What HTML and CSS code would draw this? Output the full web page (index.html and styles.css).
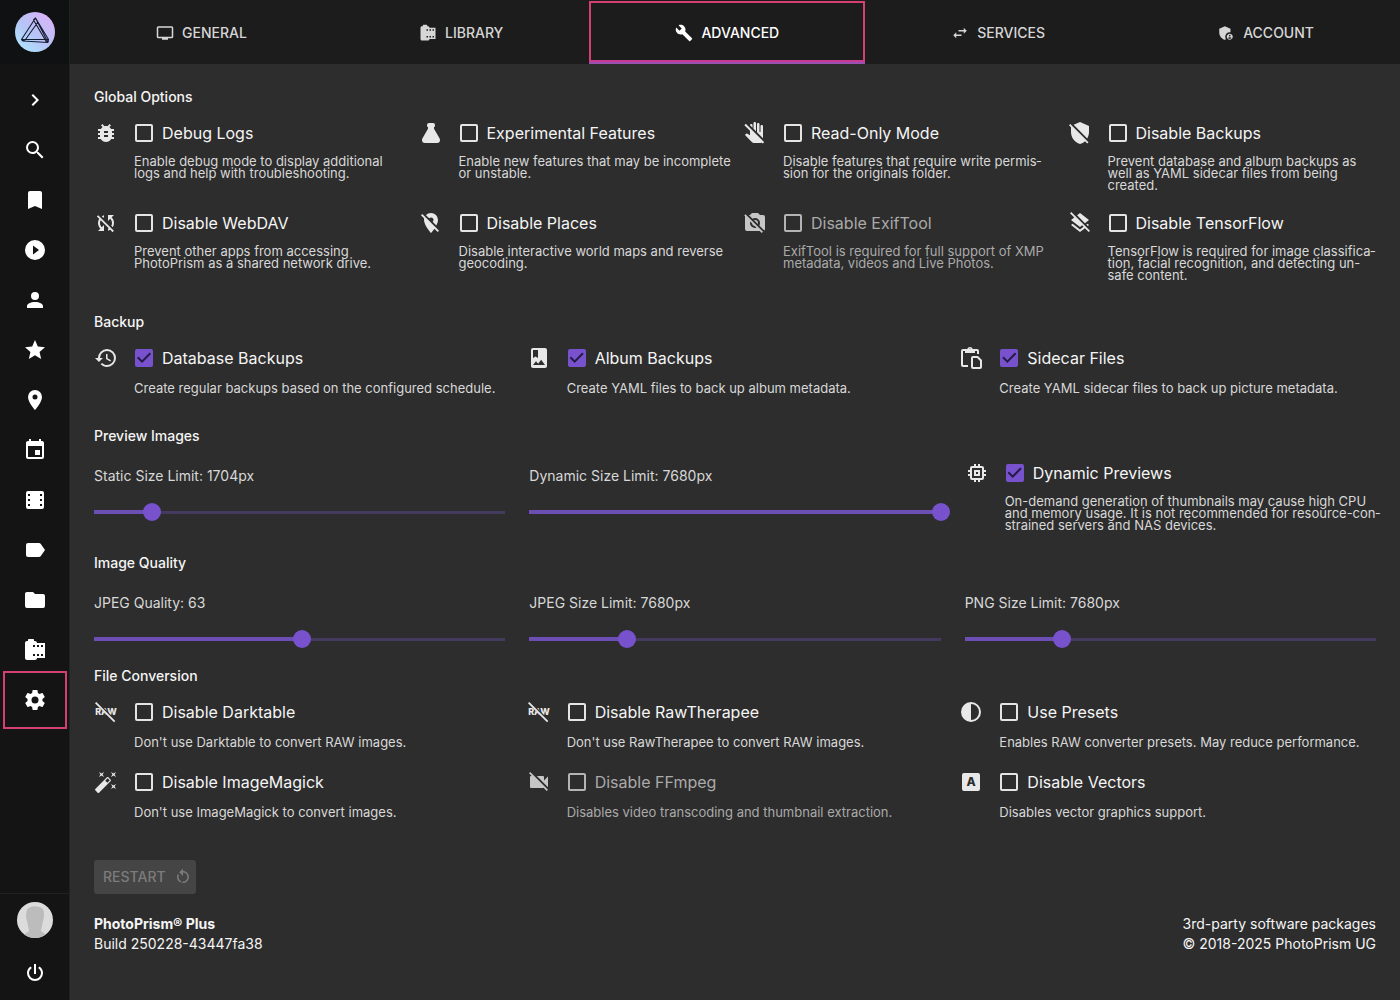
FILE: index.html
```
<!DOCTYPE html>
<html lang="en">
<head>
<meta charset="utf-8">
<meta name="viewport" content="width=device-width, initial-scale=1">
<title>Advanced Settings</title>
<link rel="stylesheet" href="styles.css">
</head>
<body>
<svg class="sprite" aria-hidden="true">
  <symbol id="i-monitor" viewBox="0 0 24 24"><path d="M21,17H3V5H21M21,3H3A2,2 0 0,0 1,5V17A2,2 0 0,0 3,19H8V21H16V19H21A2,2 0 0,0 23,17V5A2,2 0 0,0 21,3Z"/></symbol>
  <symbol id="i-roll" viewBox="0 0 24 24"><path d="M14 5c0-1.1-.9-2-2-2h-1V2c0-.55-.45-1-1-1H6c-.55 0-1 .45-1 1v1H4c-1.1 0-2 .9-2 2v15c0 1.1.9 2 2 2h8c1.1 0 2-.9 2-2h8V5h-8zm-2 13h-2v-2h2v2zm0-9h-2V7h2v2zm4 9h-2v-2h2v2zm0-9h-2V7h2v2zm4 9h-2v-2h2v2zm0-9h-2V7h2v2z"/></symbol>
  <symbol id="i-wrench" viewBox="0 0 24 24"><path d="M22.7,19L13.6,9.9C14.5,7.6 14,4.9 12.1,3C10.1,1 7.1,0.6 4.7,1.7L9,6L6,9L1.6,4.7C0.4,7.1 0.9,10.1 2.9,12.1C4.8,14 7.5,14.5 9.8,13.6L18.9,22.7C19.3,23.1 19.9,23.1 20.3,22.7L22.6,20.4C23.1,20 23.1,19.3 22.7,19Z"/></symbol>
  <symbol id="i-swap" viewBox="0 0 24 24"><path d="M21,9L17,5V8H10V10H17V13M7,11L3,15L7,19V16H14V14H7V11Z"/></symbol>
  <symbol id="i-shield-account" viewBox="0 0 24 24"><path d="M17,11c0.34,0,0.67,0.04,1,0.09V6.27L10.5,3L3,6.27v4.91c0,4.54,3.2,8.79,7.5,9.82c0.55-0.13,1.08-0.32,1.6-0.55C11.41,19.47,11,18.28,11,17C11,13.69,13.69,11,17,11z"/><path d="M17,13c-2.21,0-4,1.79-4,4c0,2.21,1.79,4,4,4s4-1.79,4-4C21,14.79,19.21,13,17,13z M17,14.38c0.62,0,1.12,0.51,1.12,1.12s-0.51,1.12-1.12,1.12s-1.12-0.51-1.12-1.12S16.38,14.38,17,14.38z M17,19.75c-0.93,0-1.74-0.46-2.24-1.17c0.05-0.72,1.51-1.08,2.24-1.08s2.19,0.36,2.24,1.08C18.74,19.29,17.93,19.75,17,19.75z"/></symbol>
  <symbol id="i-chevron" viewBox="0 0 24 24"><path d="M8.59,16.58L13.17,12L8.59,7.41L10,6L16,12L10,18L8.59,16.58Z"/></symbol>
  <symbol id="i-search" viewBox="0 0 24 24"><path d="M9.5,3A6.5,6.5 0 0,1 16,9.5C16,11.11 15.41,12.59 14.44,13.73L14.71,14H15.5L20.5,19L19,20.5L14,15.5V14.71L13.73,14.44C12.59,15.41 11.11,16 9.5,16A6.5,6.5 0 0,1 3,9.5A6.5,6.5 0 0,1 9.5,3M9.5,5C7,5 5,7 5,9.5C5,12 7,14 9.5,14C12,14 14,12 14,9.5C14,7 12,5 9.5,5Z"/></symbol>
  <symbol id="i-bookmark" viewBox="0 0 24 24"><path d="M17,3H7A2,2 0 0,0 5,5V21L12,18L19,21V5C19,3.89 18.1,3 17,3Z"/></symbol>
  <symbol id="i-play" viewBox="0 0 24 24"><path d="M10,16.5V7.5L16,12M12,2A10,10 0 0,0 2,12A10,10 0 0,0 12,22A10,10 0 0,0 22,12A10,10 0 0,0 12,2Z"/></symbol>
  <symbol id="i-person" viewBox="0 0 24 24"><path d="M12,4A4,4 0 0,1 16,8A4,4 0 0,1 12,12A4,4 0 0,1 8,8A4,4 0 0,1 12,4M12,14C16.42,14 20,15.79 20,18V20H4V18C4,15.79 7.58,14 12,14Z"/></symbol>
  <symbol id="i-star" viewBox="0 0 24 24"><path d="M12,17.27L18.18,21L16.54,13.97L22,9.24L14.81,8.62L12,2L9.19,8.62L2,9.24L7.45,13.97L5.82,21L12,17.27Z"/></symbol>
  <symbol id="i-marker" viewBox="0 0 24 24"><path d="M12,11.5A2.5,2.5 0 0,1 9.5,9A2.5,2.5 0 0,1 12,6.5A2.5,2.5 0 0,1 14.5,9A2.5,2.5 0 0,1 12,11.5M12,2A7,7 0 0,0 5,9C5,14.25 12,22 12,22C12,22 19,14.25 19,9A7,7 0 0,0 12,2Z"/></symbol>
  <symbol id="i-calendar" viewBox="0 0 24 24"><path d="M19,19H5V8H19M16,1V3H8V1H6V3H5C3.89,3 3,3.89 3,5V19A2,2 0 0,0 5,21H19A2,2 0 0,0 21,19V5C21,3.89 20.1,3 19,3H18V1M17,12H12V17H17V12Z"/></symbol>
  <symbol id="i-film" viewBox="0 0 24 24"><path fill-rule="evenodd" d="M5,3H19A2,2 0 0,1 21,5V19A2,2 0 0,1 19,21H5A2,2 0 0,1 3,19V5A2,2 0 0,1 5,3ZM5,6V8H7V6ZM5,11V13H7V11ZM5,16V18H7V16ZM17,6V8H19V6ZM17,11V13H19V11ZM17,16V18H19V16Z"/></symbol>
  <symbol id="i-label" viewBox="0 0 24 24"><path d="M17.63,5.84C17.27,5.33 16.67,5 16,5H5A2,2 0 0,0 3,7V17A2,2 0 0,0 5,19H16C16.67,19 17.27,18.66 17.63,18.15L22,12L17.63,5.84Z"/></symbol>
  <symbol id="i-folder" viewBox="0 0 24 24"><path d="M10,4H4C2.89,4 2,4.89 2,6V18A2,2 0 0,0 4,20H20A2,2 0 0,0 22,18V8C22,6.89 21.1,6 20,6H12L10,4Z"/></symbol>
  <symbol id="i-cog" viewBox="0 0 24 24"><path d="M12,15.5A3.5,3.5 0 0,1 8.5,12A3.5,3.5 0 0,1 12,8.5A3.5,3.5 0 0,1 15.5,12A3.5,3.5 0 0,1 12,15.5M19.43,12.97C19.47,12.65 19.5,12.33 19.5,12C19.5,11.67 19.47,11.34 19.43,11L21.54,9.37C21.73,9.22 21.78,8.95 21.66,8.73L19.66,5.27C19.54,5.05 19.27,4.96 19.05,5.05L16.56,6.05C16.04,5.66 15.5,5.32 14.87,5.07L14.5,2.42C14.46,2.18 14.25,2 14,2H10C9.75,2 9.54,2.18 9.5,2.42L9.13,5.07C8.5,5.32 7.96,5.66 7.44,6.05L4.95,5.05C4.73,4.96 4.46,5.05 4.34,5.27L2.34,8.73C2.21,8.95 2.27,9.22 2.46,9.37L4.57,11C4.53,11.34 4.5,11.67 4.5,12C4.5,12.33 4.53,12.65 4.57,12.97L2.46,14.63C2.27,14.78 2.21,15.05 2.34,15.27L4.34,18.73C4.46,18.95 4.73,19.03 4.95,18.95L7.44,17.94C7.96,18.34 8.5,18.68 9.13,18.93L9.5,21.58C9.54,21.82 9.75,22 10,22H14C14.25,22 14.46,21.82 14.5,21.58L14.87,18.93C15.5,18.67 16.04,18.34 16.56,17.94L19.05,18.95C19.27,19.03 19.54,18.95 19.66,18.73L21.66,15.27C21.78,15.05 21.73,14.78 21.54,14.63L19.43,12.97Z"/></symbol>
  <symbol id="i-power" viewBox="0 0 24 24"><path d="M16.56,5.44L15.11,6.89C16.84,7.94 18,9.83 18,12A6,6 0 0,1 12,18A6,6 0 0,1 6,12C6,9.83 7.16,7.94 8.88,6.88L7.44,5.44C5.36,6.88 4,9.28 4,12A8,8 0 0,0 12,20A8,8 0 0,0 20,12C20,9.28 18.64,6.88 16.56,5.44M13,3H11V13H13"/></symbol>
  <symbol id="i-bug" viewBox="0 0 24 24"><path d="M14,12H10V10H14M14,16H10V14H14M20,8H17.19C16.74,7.22 16.12,6.55 15.37,6.04L17,4.41L15.59,3L13.42,5.17C12.96,5.06 12.5,5 12,5C11.5,5 11.05,5.06 10.59,5.17L8.41,3L7,4.41L8.62,6.04C7.88,6.55 7.26,7.22 6.81,8H4V10H6.09C6.04,10.33 6,10.66 6,11V12H4V14H6V15C6,15.34 6.04,15.67 6.09,16H4V18H6.81C7.85,19.79 9.78,21 12,21C14.22,21 16.15,19.79 17.19,18H20V16H17.91C17.96,15.67 18,15.34 18,15V14H20V12H18V11C18,10.66 17.96,10.33 17.91,10H20V8Z"/></symbol>
  <symbol id="i-flask" viewBox="0 0 24 24"><path d="M6,22A3,3 0 0,1 3,19C3,18.4 3.18,17.84 3.5,17.37L9,7.81V6A1,1 0 0,1 8,5V4A2,2 0 0,1 10,2H14A2,2 0 0,1 16,4V5A1,1 0 0,1 15,6V7.81L20.5,17.37C20.82,17.84 21,18.4 21,19A3,3 0 0,1 18,22H6Z"/></symbol>
  <symbol id="i-hand-off" viewBox="0 0 24 24"><path d="M13,10.17l-2.5-2.5V2.25C10.5,1.56,11.06,1,11.75,1S13,1.56,13,2.25V10.17z M20,12.75V11V5.25C20,4.56,19.44,4,18.75,4S17.5,4.56,17.5,5.25V11h-1V3.25C16.5,2.56,15.94,2,15.25,2S14,2.56,14,3.25v7.92l6,6V12.75z M9.5,4.25C9.5,3.56,8.94,3,8.25,3c-0.67,0-1.2,0.53-1.24,1.18L9.5,6.67V4.25z M21.19,21.19L2.81,2.81L1.39,4.22L7,9.83v4.3c-1.11-.64-2.58-1.47-2.6-1.48c-.17-.09-.34-.14-.54-.14c-.26,0-.5,.09-.7,.26C3.12,12.78,2,13.88,2,13.88l6.8,7.18c.57,.6,1.35,.94,2.18,.94H17c.62,0,1.18-.19,1.65-.52l1.13,1.13L21.19,21.19z"/></symbol>
  <symbol id="i-shield-off" viewBox="0 0 24 24"><path d="M1,4.27L2.28,3L20.5,21.22L19.23,22.5L17,20.25C15.57,21.6 13.87,22.57 12,23C6.84,21.74 3,16.55 3,11V6.27L1,4.27M12,1L21,5V11C21,13.28 20.35,15.5 19.23,17.41L5.65,3.82L12,1Z"/></symbol>
  <symbol id="i-sync-off" viewBox="0 0 24 24"><path d="M20,4H14V10L16.24,7.76C17.32,8.85 18,10.34 18,12C18,13 17.75,13.94 17.32,14.77L18.78,16.23C19.55,15 20,13.56 20,12C20,9.79 19.09,7.8 17.64,6.36L20,4M2.86,5.41L5.22,7.77C4.45,9 4,10.44 4,12C4,14.21 4.91,16.2 6.36,17.64L4,20H10V14L7.76,16.24C6.68,15.15 6,13.66 6,12C6,11 6.25,10.06 6.68,9.23L14.76,17.31C14.5,17.44 14.26,17.56 14,17.65V19.74C14.79,19.53 15.54,19.2 16.22,18.78L18.58,21.14L19.85,19.87L4.14,4.14L2.86,5.41M10,6.35V4.26C9.2,4.47 8.45,4.8 7.77,5.22L9.23,6.68C9.5,6.56 9.73,6.44 10,6.35Z"/></symbol>
  <symbol id="i-marker-off" viewBox="0 0 24 24"><path d="M16.37,16.1L11.75,11.47L11.64,11.36L3.27,3L2,4.27L5.18,7.45C5.06,7.95 5,8.46 5,9C5,14.25 12,22 12,22C12,22 13.67,20.15 15.37,17.65L18.73,21L20,19.72M12,6.5A2.5,2.5 0 0,1 14.5,9C14.5,9.73 14.17,10.39 13.67,10.85L17.3,14.5C18.28,12.62 19,10.68 19,9A7,7 0 0,0 12,2C10,2 8.24,2.82 6.96,4.14L10.15,7.33C10.61,6.82 11.26,6.5 12,6.5Z"/></symbol>
  <symbol id="i-camera-off" viewBox="0 0 24 24"><path d="M1.2,4.47L2.5,3.2L20,20.72L18.73,22L16.73,20H4A2,2 0 0,1 2,18V6C2,5.78 2.04,5.57 2.1,5.37L1.2,4.47M7,4L9,2H15L17,4H20A2,2 0 0,1 22,6V18C22,18.6 21.74,19.13 21.32,19.5L16.33,14.5C16.76,13.77 17,12.91 17,12A5,5 0 0,0 12,7C11.09,7 10.23,7.24 9.5,7.67L5.82,4H7M7,12A5,5 0 0,0 12,17C12.5,17 13.03,16.92 13.5,16.77L11.72,15C10.29,14.85 9.15,13.71 9,12.28L7.23,10.5C7.08,10.97 7,11.5 7,12M12,9A3,3 0 0,1 15,12C15,12.35 14.94,12.69 14.83,13L11,9.17C11.31,9.06 11.65,9 12,9Z"/></symbol>
  <symbol id="i-layers-off" viewBox="0 0 24 24"><path d="M3.27,1L2,2.27L6.22,6.5L3,9L4.63,10.27L12,16L14.1,14.37L15.53,15.8L12,18.54L4.63,12.81L3,14.07L12,21.07L16.95,17.22L20.73,21L22,19.73L3.27,1M19.36,10.27L21,9L12,2L9.09,4.27L16.96,12.15L19.36,10.27M19.81,15L21,14.07L19.57,12.64L18.38,13.56L19.81,15Z"/></symbol>
  <symbol id="i-history" viewBox="0 0 24 24"><path d="M13.5,8H12V13L16.28,15.54L17,14.33L13.5,12.25V8M13,3A9,9 0 0,0 4,12H1L4.96,16.03L9,12H6A7,7 0 0,1 13,5A7,7 0 0,1 20,12A7,7 0 0,1 13,19C11.07,19 9.32,18.21 8.06,16.94L6.64,18.36C8.27,20 10.5,21 13,21A9,9 0 0,0 22,12A9,9 0 0,0 13,3"/></symbol>
  <symbol id="i-album" viewBox="0 0 24 24"><path d="M6,19L9,15.14L11.14,17.72L14.14,13.86L18,19H6M6,4H11V12L8.5,10.5L6,12M18,2H6A2,2 0 0,0 4,4V20A2,2 0 0,0 6,22H18A2,2 0 0,0 20,20V4A2,2 0 0,0 18,2Z"/></symbol>
  <symbol id="i-clipboard" viewBox="0 0 24 24"><path fill="none" stroke="currentColor" stroke-width="2" stroke-linejoin="round" d="M9,20H4A1,1 0 0,1 3,19V5A1,1 0 0,1 4,4H18A1,1 0 0,1 19,5V8M13,12A1,1 0 0,1 14,11H18.500L22,14.500V21A1,1 0 0,1 21,22H14A1,1 0 0,1 13,21Z"/><path fill-rule="evenodd" d="M6,3H8.200A3,3 0 0,1 13.800,3H16V7H6ZM11,2.500A1,1 0 0,0 11,4.500A1,1 0 0,0 11,2.500Z"/></symbol>
  <symbol id="i-chip" viewBox="0 0 24 24"><path d="M17,17H7V7H17M21,11V9H19V7C19,5.89 18.1,5 17,5H15V3H13V5H11V3H9V5H7C5.89,5 5,5.89 5,7V9H3V11H5V13H3V15H5V17A2,2 0 0,0 7,19H9V21H11V19H13V21H15V19H17A2,2 0 0,0 19,17V15H21V13H19V11M13,13H11V11H13M15,9H9V15H15V9Z"/></symbol>
  <symbol id="i-raw-off" viewBox="0 0 24 24"><text class="icon-text" x="12" y="15" text-anchor="middle" font-size="9">RAW</text><path class="cut" d="M4,2L22,20L20,22L2,4Z"/><path d="M2.300,2L21.300,21L20,22.300L1,3.300Z"/></symbol>
  <symbol id="i-contrast" viewBox="0 0 24 24"><circle cx="12" cy="12" r="9" fill="none" stroke="currentColor" stroke-width="2"/><path d="M12,3V21A9,9 0 0,1 12,3Z"/></symbol>
  <symbol id="i-wand" viewBox="0 0 24 24"><path d="M7.5,5.6L5,7L6.4,4.5L5,2L7.5,3.4L10,2L8.6,4.5L10,7L7.5,5.6M19.5,15.4L22,14L20.6,16.5L22,19L19.5,17.6L17,19L18.4,16.5L17,14L19.5,15.4M22,2L20.6,4.5L22,7L19.5,5.6L17,7L18.4,4.5L17,2L19.5,3.4L22,2M13.34,12.78L15.78,10.34L13.66,8.22L11.22,10.66L13.34,12.78M14.37,7.29L16.71,9.63C17.1,10 17.1,10.65 16.71,11.04L5.04,22.71C4.65,23.1 4,23.1 3.63,22.71L1.29,20.37C0.9,20 0.9,19.35 1.29,18.96L12.96,7.29C13.35,6.9 14,6.9 14.37,7.29Z"/></symbol>
  <symbol id="i-video-off" viewBox="0 0 24 24"><path d="M3.27,2L2,3.27L4.73,6H4A1,1 0 0,0 3,7V17A1,1 0 0,0 4,18H16C16.2,18 16.39,17.92 16.54,17.82L19.73,21L21,19.73M21,6.5L17,10.5V7A1,1 0 0,0 16,6H9.82L21,17.18V6.5Z"/></symbol>
  <symbol id="i-alpha-box" viewBox="0 0 24 24"><rect x="3" y="3" width="18" height="18" rx="2"/><text class="icon-text cut" x="12" y="16" text-anchor="middle" font-size="12">A</text></symbol>
  <symbol id="i-restart" viewBox="0 0 24 24"><path d="M12,4C14.1,4 16.1,4.8 17.6,6.3C20.7,9.4 20.7,14.5 17.6,17.6C15.8,19.5 13.3,20.2 10.9,19.9L11.4,17.9C13.1,18.1 14.9,17.5 16.2,16.2C18.5,13.9 18.5,10.1 16.2,7.7C15.1,6.6 13.5,6 12,6V10.6L7,5.6L12,0.6V4M6.3,17.6C3.7,15 3.3,11 5.1,7.9L6.6,9.4C5.5,11.6 5.9,14.4 7.8,16.2C8.3,16.7 8.9,17.1 9.6,17.4L9,19.4C8,19 7.1,18.4 6.3,17.6Z"/></symbol>
</svg>

<div class="app">
  <aside class="sidebar">
    <a class="brand" href="#" aria-label="Home">
      <svg class="logo" viewBox="0 0 40 40">
        <defs><linearGradient id="brand-gradient" x1="0.1" y1="0.9" x2="0.8" y2="0.1"><stop offset="0" stop-color="#aee4ff"/><stop offset="0.5" stop-color="#b6c3f5"/><stop offset="1" stop-color="#d7b4f8"/></linearGradient></defs>
        <circle cx="20" cy="20" r="20" fill="url(#brand-gradient)"/>
        <path d="M20.500,6L6.500,27.500L8,29L33,30.500L33.500,27.500L20.500,6ZM20.500,6L18.500,8L31.500,30M23,10L10.500,27.500L33.500,27.500M6.500,27.500L10.500,27.500L8,29M20.500,6L33,30.500" fill="none" stroke="#151b30" stroke-width="1.100" stroke-linejoin="round"/>
      </svg>
    </a>
    <nav class="side-nav" aria-label="Main">
      <a href="#" aria-label="Expand"><svg class="icon"><use href="#i-chevron"/></svg></a>
      <a href="#" aria-label="Search"><svg class="icon"><use href="#i-search"/></svg></a>
      <a href="#" aria-label="Albums"><svg class="icon"><use href="#i-bookmark"/></svg></a>
      <a href="#" aria-label="Videos"><svg class="icon"><use href="#i-play"/></svg></a>
      <a href="#" aria-label="People"><svg class="icon"><use href="#i-person"/></svg></a>
      <a href="#" aria-label="Favorites"><svg class="icon"><use href="#i-star"/></svg></a>
      <a href="#" aria-label="Places"><svg class="icon"><use href="#i-marker"/></svg></a>
      <a href="#" aria-label="Calendar"><svg class="icon"><use href="#i-calendar"/></svg></a>
      <a href="#" aria-label="Moments"><svg class="icon"><use href="#i-film"/></svg></a>
      <a href="#" aria-label="Labels"><svg class="icon"><use href="#i-label"/></svg></a>
      <a href="#" aria-label="Folders"><svg class="icon"><use href="#i-folder"/></svg></a>
      <a href="#" aria-label="Library"><svg class="icon"><use href="#i-roll"/></svg></a>
      <a class="current" href="#" aria-label="Settings"><svg class="icon"><use href="#i-cog"/></svg></a>
    </nav>
    <div class="side-user">
      <a href="#" aria-label="Account">
        <svg class="avatar" viewBox="0 0 36 36"><defs><clipPath id="round"><circle cx="18" cy="18" r="18"/></clipPath></defs><g clip-path="url(#round)"><rect width="36" height="36" fill="#dcdcdc"/><path d="M10,8C12,3 24,3 26.500,8C27.500,12 27,17 25.500,21C25,25 24,27 24,29C26,31 29,31 30,36H6C7,31 10,31 12,29C12,27 11,25 10.500,21C9,17 8.500,12 10,8Z" fill="#bcbcbc"/></g></svg>
      </a>
      <button class="power" type="button" aria-label="Log out"><svg class="icon"><use href="#i-power"/></svg></button>
    </div>
  </aside>

  <main class="main">
    <nav class="tabs" aria-label="Settings">
      <a class="tab" href="#"><svg class="icon-small"><use href="#i-monitor"/></svg>GENERAL</a>
      <a class="tab" href="#"><svg class="icon-small"><use href="#i-roll"/></svg>LIBRARY</a>
      <a class="tab active" href="#" aria-current="page"><svg class="icon-small"><use href="#i-wrench"/></svg>ADVANCED</a>
      <a class="tab" href="#"><svg class="icon-small"><use href="#i-swap"/></svg>SERVICES</a>
      <a class="tab" href="#"><svg class="icon-small"><use href="#i-shield-account"/></svg>ACCOUNT</a>
    </nav>

    <form class="content">
      <section class="section global">
        <h2>Global Options</h2>
        <div class="grid four">
          <div class="option"><svg class="icon"><use href="#i-bug"/></svg><label><input type="checkbox">Debug Logs</label><p>Enable debug mode to display additional logs and help with troubleshooting.</p></div>
          <div class="option"><svg class="icon"><use href="#i-flask"/></svg><label><input type="checkbox">Experimental Features</label><p>Enable new features that may be incomplete or unstable.</p></div>
          <div class="option"><svg class="icon"><use href="#i-hand-off"/></svg><label><input type="checkbox">Read-Only Mode</label><p>Disable features that require write permis&shy;sion for the originals folder.</p></div>
          <div class="option"><svg class="icon"><use href="#i-shield-off"/></svg><label><input type="checkbox">Disable Backups</label><p>Prevent database and album backups as well as YAML sidecar files from being created.</p></div>
          <div class="option"><svg class="icon"><use href="#i-sync-off"/></svg><label><input type="checkbox">Disable WebDAV</label><p>Prevent other apps from accessing PhotoPrism as a shared network drive.</p></div>
          <div class="option"><svg class="icon"><use href="#i-marker-off"/></svg><label><input type="checkbox">Disable Places</label><p>Disable interactive world maps and reverse geocoding.</p></div>
          <div class="option disabled"><svg class="icon"><use href="#i-camera-off"/></svg><label><input type="checkbox" disabled>Disable ExifTool</label><p>ExifTool is required for full support of XMP metadata, videos and Live Photos.</p></div>
          <div class="option"><svg class="icon"><use href="#i-layers-off"/></svg><label><input type="checkbox">Disable TensorFlow</label><p>TensorFlow is required for image classifica&shy;tion, facial recognition, and detecting un-<br>safe content.</p></div>
        </div>
      </section>

      <section class="section backup">
        <h2>Backup</h2>
        <div class="grid three">
          <div class="option"><svg class="icon"><use href="#i-history"/></svg><label><input type="checkbox" checked>Database Backups</label><p>Create regular backups based on the configured schedule.</p></div>
          <div class="option"><svg class="icon"><use href="#i-album"/></svg><label><input type="checkbox" checked>Album Backups</label><p>Create YAML files to back up album metadata.</p></div>
          <div class="option"><svg class="icon"><use href="#i-clipboard"/></svg><label><input type="checkbox" checked>Sidecar Files</label><p>Create YAML sidecar files to back up picture metadata.</p></div>
        </div>
      </section>

      <section class="section preview">
        <h2>Preview Images</h2>
        <div class="grid sliders">
          <div class="slider"><label for="static-size">Static Size Limit: 1704px</label><div class="track" style="--value: 14.1%"><input id="static-size" type="range" min="720" max="7680" value="1704"></div></div>
          <div class="slider"><label for="dynamic-size">Dynamic Size Limit: 7680px</label><div class="track" style="--value: 100%"><input id="dynamic-size" type="range" min="720" max="7680" value="7680"></div></div>
          <div class="option"><svg class="icon"><use href="#i-chip"/></svg><label><input type="checkbox" checked>Dynamic Previews</label><p>On-demand generation of thumbnails may cause high CPU and memory usage. It is not recommended for resource-con&shy;strained servers and NAS devices.</p></div>
        </div>
      </section>

      <section class="section quality">
        <h2>Image Quality</h2>
        <div class="grid sliders">
          <div class="slider"><label for="jpeg-quality">JPEG Quality: 63</label><div class="track" style="--value: 50.7%"><input id="jpeg-quality" type="range" min="25" max="100" value="63"></div></div>
          <div class="slider"><label for="jpeg-size">JPEG Size Limit: 7680px</label><div class="track" style="--value: 23.8%"><input id="jpeg-size" type="range" min="720" max="30000" value="7680"></div></div>
          <div class="slider"><label for="png-size">PNG Size Limit: 7680px</label><div class="track" style="--value: 23.8%"><input id="png-size" type="range" min="720" max="30000" value="7680"></div></div>
        </div>
      </section>

      <section class="section conversion">
        <h2>File Conversion</h2>
        <div class="grid three">
          <div class="option"><svg class="icon"><use href="#i-raw-off"/></svg><label><input type="checkbox">Disable Darktable</label><p>Don't use Darktable to convert RAW images.</p></div>
          <div class="option"><svg class="icon"><use href="#i-raw-off"/></svg><label><input type="checkbox">Disable RawTherapee</label><p>Don't use RawTherapee to convert RAW images.</p></div>
          <div class="option"><svg class="icon"><use href="#i-contrast"/></svg><label><input type="checkbox">Use Presets</label><p>Enables RAW converter presets. May reduce performance.</p></div>
          <div class="option"><svg class="icon"><use href="#i-wand"/></svg><label><input type="checkbox">Disable ImageMagick</label><p>Don't use ImageMagick to convert images.</p></div>
          <div class="option disabled"><svg class="icon"><use href="#i-video-off"/></svg><label><input type="checkbox" disabled>Disable FFmpeg</label><p>Disables video transcoding and thumbnail extraction.</p></div>
          <div class="option"><svg class="icon"><use href="#i-alpha-box"/></svg><label><input type="checkbox">Disable Vectors</label><p>Disables vector graphics support.</p></div>
        </div>
      </section>

      <button class="restart" type="button" disabled>RESTART<svg><use href="#i-restart"/></svg></button>

      <footer class="footer">
        <div><strong>PhotoPrism® Plus</strong><br>Build 250228-43447fa38</div>
        <div class="legal"><a href="#">3rd-party software packages</a><br><a href="#">© 2018-2025 PhotoPrism UG</a></div>
      </footer>
    </form>
  </main>
</div>
</body>
</html>
```
FILE: styles.css
```
:root {
  --surface: #2d2d2d;
  --primary: #7852cd;
  --text: #f5f5f5;
  --highlight: #d63f73;
}

* { box-sizing: border-box; }

body {
  margin: 0;
  background: var(--surface);
  color: var(--text);
  font-family: Inter, "Liberation Sans", sans-serif;
  font-size: 14px;
  line-height: 20px;
}

a { color: inherit; text-decoration: none; }

svg { display: block; fill: currentColor; }

.sprite { display: none; }
.icon { width: 24px; height: 24px; }
.icon-small { width: 18px; height: 18px; }
.icon-text { font-family: Inter, sans-serif; font-weight: 800; }
.cut { fill: var(--surface); }

.app {
  display: grid;
  grid-template-columns: 70px minmax(0, 1fr);
  min-height: 100vh;
}

/* Sidebar */
.sidebar {
  position: sticky;
  top: 0;
  display: flex;
  flex-direction: column;
  height: 100vh;
  background: #141414;
  border-right: 1px solid #222;
  color: #fff;
}

.brand {
  display: grid;
  place-items: center;
  height: 64px;
  background: #0f1112;
}

.logo { width: 40px; height: 40px; }

.side-nav { flex: 1; padding-top: 11px; }

.side-nav a {
  display: grid;
  place-items: center;
  height: 50px;
}

.side-nav .current { position: relative; }

.side-nav .current::after {
  content: "";
  position: absolute;
  inset: -4px 2px -4px 3px;
  border: 2px solid var(--highlight);
}

.side-user {
  display: flex;
  flex-direction: column;
  align-items: center;
  gap: 23px;
  padding: 8px 0 15px;
  border-top: 1px solid #222;
}

.avatar { width: 36px; height: 36px; }

.power {
  padding: 0;
  border: 0;
  background: none;
  color: inherit;
}

/* Tabs */
.tabs {
  display: flex;
  height: 64px;
  background: #1c1c1c;
}

.tab {
  flex: 1 1 auto;
  display: flex;
  align-items: center;
  justify-content: center;
  gap: 8px;
  padding-top: 2px;
  color: #d6d6d6;
  font-weight: 500;
}

.tab.active {
  position: relative;
  box-shadow: inset 0 -2px #9a50b2;
  color: #fff;
}

.tab.active::after {
  content: "";
  position: absolute;
  inset: 1px 0 2px;
  border: 2px solid var(--highlight);
  border-bottom-color: #c83a92;
}

/* Settings form */
.content { padding: 21px 24px 46px; }

h2 {
  margin: 0 0 4px;
  font-size: 14px;
  font-weight: 500;
  line-height: 24px;
}

.grid { display: grid; }
.four { grid-template-columns: repeat(4, minmax(0, 1fr)); gap: 12px 16px; }
.three { grid-template-columns: repeat(3, minmax(0, 1fr)); gap: 14px 16px; }
.sliders { grid-template-columns: repeat(3, minmax(0, 1fr)); gap: 24px; }

.global { margin-bottom: 29px; }
.backup { margin-bottom: 30px; }
.preview { margin-bottom: 20px; }
.quality { margin-bottom: 9px; }
.conversion { margin-bottom: 42px; }

.option {
  display: grid;
  grid-template-columns: 24px minmax(0, 1fr);
  grid-template-rows: 40px auto;
  gap: 2px 16px;
  align-items: center;
  align-content: start;
}

.three .option { row-gap: 4px; }
.sliders .option { padding-top: 1px; }

.option .icon { color: #e8e8e8; }

.option label {
  display: flex;
  align-items: center;
  gap: 9px;
  padding-left: 1px;
  font-size: 16px;
  line-height: 24px;
}

/* Help texts may run a little into the column gap. */
.option p {
  grid-column: 2;
  margin: 0 -6px 0 0;
  color: #d8d8d8;
  font-size: 13px;
  line-height: 12px;
}

.option.disabled .icon { color: #c6c6c6; }
.option.disabled label { color: #aaa; }
.option.disabled p { color: #aaa; }

input[type="checkbox"] {
  appearance: none;
  flex: none;
  width: 18px;
  height: 18px;
  margin: 0;
  border: 2px solid #e4e4e4;
  border-radius: 2px;
}

input[type="checkbox"]:disabled { border-color: #b4b4b4; }

input[type="checkbox"]:checked {
  border: 0;
  background: var(--primary);
}

input[type="checkbox"]:checked::before {
  content: "";
  display: block;
  height: 18px;
  background: #251a45;
  clip-path: polygon(39% 78%, 11% 50%, 19% 42%, 39% 62%, 81% 20%, 89% 28%);
}

.slider { padding-top: 14px; }

.slider label {
  display: block;
  margin-bottom: 10px;
  color: #d8d8d8;
}

.track {
  height: 32px;
  border-radius: 2px;
  background:
    linear-gradient(#6c4eb4, #6c4eb4) left center / var(--value) 4px no-repeat,
    linear-gradient(#443a60, #443a60) left center / 100% 3px no-repeat;
}

/* The thumb overhangs both track ends by half its width. */
.track input {
  appearance: none;
  display: block;
  width: calc(100% + 18px);
  height: 32px;
  margin: 0 -9px;
  background: none;
}

.track input::-webkit-slider-thumb {
  appearance: none;
  width: 18px;
  height: 18px;
  border-radius: 50%;
  background: var(--primary);
}

.track input::-moz-range-thumb {
  width: 18px;
  height: 18px;
  border: 0;
  border-radius: 50%;
  background: var(--primary);
}

.restart {
  display: flex;
  align-items: center;
  gap: 8px;
  height: 34px;
  padding: 0 4px 0 9px;
  border: 0;
  border-radius: 3px;
  background: #454545;
  color: #7c7c7c;
  font: 500 14px/20px Inter, "Liberation Sans", sans-serif;
}

.restart svg { width: 18px; height: 18px; }

.footer {
  display: flex;
  justify-content: space-between;
  margin-top: 20px;
}

.footer strong { font-weight: 700; }
.legal { text-align: right; }
```
